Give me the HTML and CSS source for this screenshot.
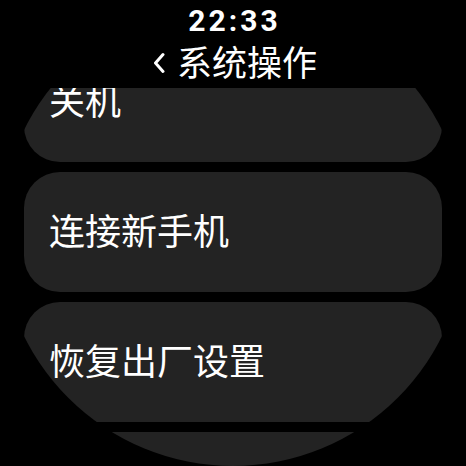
FILE: index.html
```html
<!DOCTYPE html>
<html lang="zh-CN">
<head>
  <meta charset="UTF-8">
  <title>系统操作</title>
  <link rel="stylesheet" href="styles.css">
</head>
<body>

<div class="watch">
  <div class="header">
    <div class="clock">22:33</div>
    <div class="title">
      <svg class="back" width="12" height="22" viewBox="0 0 12 22">
        <path d="M10 2.5 L2.5 11 L10 19.5" fill="none" stroke="white" stroke-width="3" stroke-linecap="round" stroke-linejoin="round"/>
      </svg>
      <span>系统操作</span>
    </div>
  </div>

  <div class="list">
    <div class="list-inner">
      <div class="item">关机</div>
      <div class="item">连接新手机</div>
      <div class="item">恢复出厂设置</div>
      <div class="item"></div>
    </div>
  </div>
</div>

</body>
</html>
```

FILE: styles.css
```css
html, body {
  margin: 0;
  background: #000;
}

body {
  font-family: "Noto Sans CJK SC", "Noto Sans", sans-serif;
  color: white;
}

.watch {
  width: 466px;
  height: 466px;
  border-radius: 50%;
  overflow: hidden;
  background: #000;
  display: flex;
  flex-direction: column;
}

.header {
  height: 88px;
  flex-shrink: 0;
  display: flex;
  flex-direction: column;
  align-items: center;
}

.clock {
  font-family: Roboto, "Noto Sans", sans-serif;
  font-weight: bold;
  font-size: 30px;
  letter-spacing: 3px;
  line-height: 30px;
  margin-top: 6px;
  padding-left: 3px;
}

.title {
  display: flex;
  align-items: center;
  gap: 12px;
  font-size: 35px;
  line-height: 40px;
  margin-top: 5px;
  margin-left: 4px;
}

.back {
  display: block;
  margin-top: 4px;
}

.list {
  flex: 1;
  overflow: hidden;
}

.list-inner {
  margin-top: -46px;
  display: flex;
  flex-direction: column;
  gap: 10px;
}

.item {
  margin: 0 24px;
  height: 120px;
  flex-shrink: 0;
  background: #232323;
  border-radius: 36px;
  display: flex;
  align-items: center;
  padding-left: 25px;
  padding-bottom: 6px;
  box-sizing: border-box;
  font-size: 36px;
}
```
